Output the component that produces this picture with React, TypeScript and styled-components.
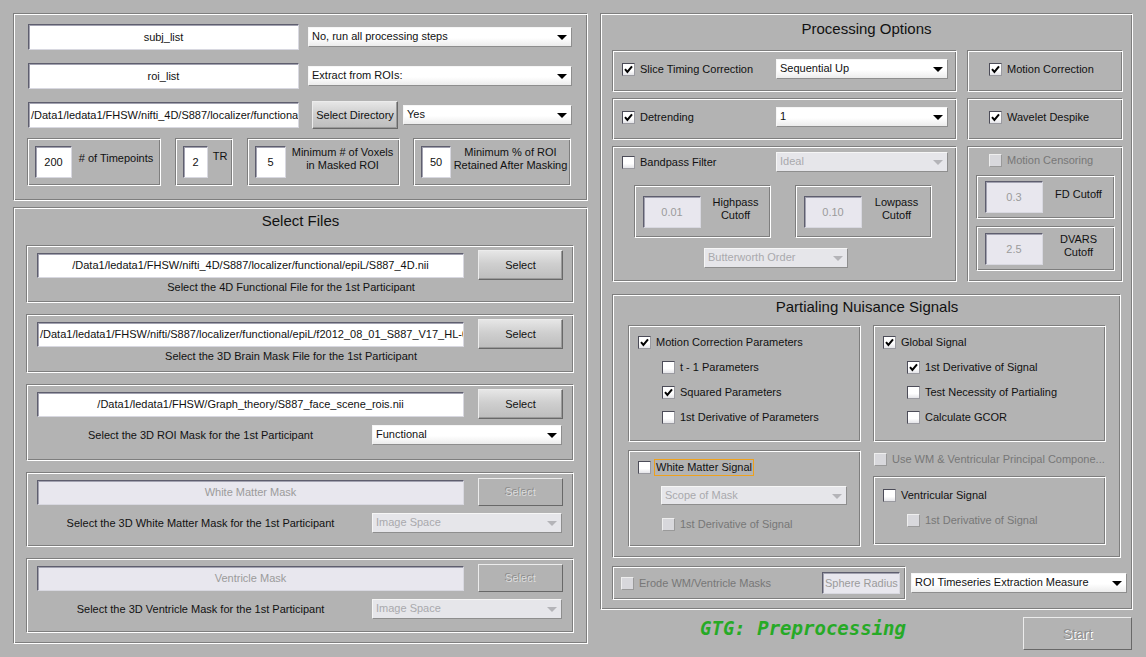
import React from "react";
import styled, { createGlobalStyle, css } from "styled-components";

const GlobalStyle = createGlobalStyle`
  html, body {
    margin: 0;
    padding: 0;
    background: #b3b3b3;
  }
  body {
    font-family: "Liberation Sans", Arial, sans-serif;
    font-size: 11px;
    color: #111;
  }
  * {
    box-sizing: border-box;
  }
`;

// etched-in frame border used by every uipanel
const etched = css`
  border: 1px solid;
  border-color: #7e7e7e #ffffff #ffffff #7e7e7e;
  box-shadow: inset 1px 1px 0 #ffffff, inset -1px -1px 0 #7e7e7e;
`;

const Screen = styled.div`
  width: 1146px;
  height: 657px;
  display: flex;
  align-items: flex-start;
  gap: 12px;
  padding: 13px 0 0 13px;
  overflow: hidden;
`;

const Column = styled.div<{ $w: number }>`
  width: ${(p) => p.$w}px;
  display: flex;
  flex-direction: column;
  flex: none;
`;

const Frame = styled.div<{ $w: number; $h: number; $ml?: number }>`
  ${etched};
  width: ${(p) => p.$w}px;
  height: ${(p) => p.$h}px;
  margin-left: ${(p) => p.$ml ?? 0}px;
  flex: none;
`;

const PanelTitle = styled.div<{ $h: number; $lh: number }>`
  height: ${(p) => p.$h}px;
  line-height: ${(p) => p.$lh}px;
  text-align: center;
  font-size: 15px;
  color: #111;
`;

/* ---------- basic controls ---------- */

const TextField = styled.div<{ $w: number; $h: number; $disabled?: boolean }>`
  width: ${(p) => p.$w}px;
  height: ${(p) => p.$h}px;
  flex: none;
  padding: 0 2px;
  background: ${(p) => (p.$disabled ? "#e8e7ee" : "#ffffff")};
  color: ${(p) => (p.$disabled ? "#9b9b9b" : "#111")};
  border: 1px solid;
  border-color: #5e5e6e #d8d8e0 #d8d8e0 #5e5e6e;
  box-shadow: inset 1px 1px 0 #a2a2b0;
  line-height: ${(p) => p.$h - 2}px;
  text-align: center;
  white-space: nowrap;
  overflow: hidden;
`;

const Dropdown = styled.div<{ $w: number; $h?: number; $ml?: number; $disabled?: boolean }>`
  position: relative;
  width: ${(p) => p.$w}px;
  height: ${(p) => p.$h ?? 20}px;
  margin-left: ${(p) => p.$ml ?? 0}px;
  flex: none;
  padding: 0 18px 0 3px;
  line-height: ${(p) => (p.$h ?? 20) - 3}px;
  white-space: nowrap;
  overflow: hidden;
  color: ${(p) => (p.$disabled ? "#a9a9ad" : "#111")};
  background: ${(p) =>
    p.$disabled ? "#e6e6ea" : "linear-gradient(#ffffff, #ffffff 55%, #ececec)"};
  border: 1px solid;
  border-color: #f6f6f6 #8e8e8e #8e8e8e #f6f6f6;

  &::after {
    content: "";
    position: absolute;
    right: 4px;
    top: 50%;
    margin-top: -2px;
    border-left: 5px solid transparent;
    border-right: 5px solid transparent;
    border-top: 5px solid ${(p) => (p.$disabled ? "#b4b4b8" : "#000")};
  }
`;

const PushButton = styled.div<{ $w: number; $h: number; $ml?: number; $disabled?: boolean }>`
  width: ${(p) => p.$w}px;
  height: ${(p) => p.$h}px;
  margin-left: ${(p) => p.$ml ?? 0}px;
  flex: none;
  display: flex;
  align-items: center;
  justify-content: center;
  white-space: nowrap;
  border: 1px solid;
  border-color: #ececec #686868 #686868 #ececec;
  ${(p) =>
    p.$disabled
      ? css`
          background: #b3b3b3;
          color: #dcdcdc;
          text-shadow: -1px -1px 0 #8a8a8a;
        `
      : css`
          background: linear-gradient(#e6e6e6, #cfcfcf 45%, #bdbdbd);
          box-shadow: inset -1px -1px 0 #9a9a9a;
          color: #111;
        `}
`;

const Box = styled.span<{ $disabled?: boolean }>`
  width: 13px;
  height: 13px;
  flex: none;
  display: inline-flex;
  align-items: center;
  justify-content: center;
  border: 1px solid;
  ${(p) =>
    p.$disabled
      ? css`
          background: #d8d8dc;
          border-color: #eeeeee #9a9a9a #9a9a9a #eeeeee;
        `
      : css`
          background: linear-gradient(#ffffff, #ffffff 60%, #e4e4e8);
          border-color: #4c4c58 #9a9aa0 #9a9aa0 #4c4c58;
        `}
`;

const Caption = styled.span<{ $disabled?: boolean; $focus?: boolean }>`
  white-space: nowrap;
  color: ${(p) => (p.$disabled ? "#777" : "#111")};
  padding: 0 1px;
  border: 1px solid ${(p) => (p.$focus ? "#eea11c" : "transparent")};
  line-height: 15px;
`;

const CheckRow = styled.div<{ $h?: number; $indent?: number }>`
  display: flex;
  align-items: center;
  gap: 3px;
  height: ${(p) => p.$h ?? 25}px;
  padding-left: ${(p) => p.$indent ?? 0}px;
  flex: none;
`;

function Check({
  label,
  checked,
  disabled,
  focus,
  h,
  indent,
}: {
  label: string;
  checked?: boolean;
  disabled?: boolean;
  focus?: boolean;
  h?: number;
  indent?: number;
}) {
  return (
    <CheckRow $h={h} $indent={indent}>
      <Box $disabled={disabled}>
        {checked && (
          <svg width="11" height="11" viewBox="0 0 11 11">
            <path d="M2 5.2 L4.4 8 L9 2.4" fill="none" stroke="#000" strokeWidth="2" />
          </svg>
        )}
      </Box>
      <Caption $disabled={disabled} $focus={focus}>
        {label}
      </Caption>
    </CheckRow>
  );
}

/* ---------- setup panel (top left) ---------- */

const SetupPanel = styled(Frame)`
  display: flex;
  flex-direction: column;
  gap: 13px;
  padding: 10px 0 0 14px;
`;

const FieldRow = styled.div`
  display: flex;
  align-items: center;
  height: 26px;
`;

const NumberRow = styled.div`
  display: flex;
  margin: -3px 0 0 -1px;
`;

const NumberFrame = styled(Frame)`
  display: flex;
  align-items: center;
  padding-left: 7px;
`;

const NumberLabel = styled.div<{ $mb: number }>`
  flex: 1;
  text-align: center;
  line-height: 13px;
  margin-bottom: ${(p) => p.$mb}px;
  white-space: nowrap;
`;

/* ---------- select files panel ---------- */

const FilesPanel = styled(Frame)`
  display: flex;
  flex-direction: column;
  gap: 11px;
  padding: 0 12px;
  margin-top: 6px;
`;

const FileFrame = styled(Frame)`
  display: flex;
  flex-direction: column;
  padding: 4px 0 0 10px;
`;

const FileTop = styled.div`
  display: flex;
  align-items: center;
  height: 30px;
  gap: 14px;
`;

const FileNote = styled.div<{ $w: number }>`
  width: ${(p) => p.$w}px;
  text-align: center;
  line-height: 14px;
  white-space: nowrap;
`;

const FileBottom = styled.div`
  display: flex;
  align-items: center;
  height: 20px;
  margin-top: 6px;
`;

/* ---------- processing options ---------- */

const OptionsPanel = styled(Frame)`
  display: flex;
  flex-direction: column;
  padding: 0 11px;
`;

const OptionGrid = styled.div`
  display: grid;
  grid-template-columns: 345px 156px;
  grid-template-rows: 42px 42px 136px;
  column-gap: 10px;
  row-gap: 6px;
`;

const StepFrame = styled.div`
  ${etched};
  display: flex;
  align-items: center;
  padding: 0 8px 4px 9px;
`;

const ToggleFrame = styled.div`
  ${etched};
  display: flex;
  align-items: center;
  padding: 0 0 4px 21px;
`;

const FilterFrame = styled.div`
  ${etched};
  display: flex;
  flex-direction: column;
  padding: 5px 8px 0 9px;
`;

const FilterHead = styled.div`
  display: flex;
  align-items: center;
  height: 20px;
`;

const CutoffRow = styled.div`
  display: flex;
  margin-top: 13px;
`;

const CutoffFrame = styled(Frame)`
  display: flex;
  align-items: center;
  padding-left: 8px;
`;

const CutoffLabel = styled.div`
  flex: 1;
  text-align: center;
  line-height: 13px;
  margin-bottom: 6px;
  white-space: nowrap;
`;

const OrderRow = styled.div`
  display: flex;
  margin: 10px 0 0 82px;
`;

const CensorFrame = styled.div`
  ${etched};
  display: flex;
  flex-direction: column;
  padding-top: 6px;
`;

const CensorStack = styled.div`
  display: flex;
  flex-direction: column;
  gap: 7px;
  margin: 8px 0 0 8px;
`;

/* ---------- nuisance signals ---------- */

const NuisanceFrame = styled(Frame)`
  margin-top: 12px;
  padding: 0 14px 0 15px;
  display: flex;
  flex-direction: column;
`;

const NuisanceGrid = styled.div`
  display: grid;
  grid-template-columns: 233px 233px;
  grid-template-rows: 117px 97px;
  column-gap: 12px;
  row-gap: 8px;
`;

const SignalFrame = styled.div<{ $pt?: number }>`
  ${etched};
  display: flex;
  flex-direction: column;
  padding: ${(p) => p.$pt ?? 4}px 0 0 9px;
`;

const SignalStack = styled.div`
  display: flex;
  flex-direction: column;
`;

const VentricleFrame = styled(SignalFrame)`
  margin-top: 8px;
  height: 69px;
`;

const ScopeRow = styled.div`
  display: flex;
  margin: 6px 0 7px 23px;
`;

const ExtractRow = styled.div`
  display: flex;
  align-items: center;
  margin-top: 8px;
`;

const ErodeFrame = styled(Frame)`
  display: flex;
  align-items: center;
  justify-content: space-between;
  padding: 0 5px 0 8px;
`;

const Footer = styled.div`
  display: flex;
  align-items: flex-start;
  margin-top: 7px;
  height: 33px;
`;

const Brand = styled.div`
  width: 406px;
  text-align: center;
  line-height: 22px;
  font-family: "DejaVu Sans Mono", "Liberation Mono", monospace;
  font-weight: bold;
  font-style: italic;
  font-size: 19px;
  color: #26aa26;
`;

const StartButton = styled(PushButton)`
  font-size: 14px;
  color: #909090;
  text-shadow: 1px 1px 0 #ffffff;
`;

const files = [
  {
    path: "/Data1/ledata1/FHSW/nifti_4D/S887/localizer/functional/epiL/S887_4D.nii",
    note: "Select the 4D Functional File for the 1st Participant",
    h: 58,
  },
  {
    path: "/Data1/ledata1/FHSW/nifti/S887/localizer/functional/epiL/f2012_08_01_S887_V17_HL-004_brain_mask.nii",
    note: "Select the 3D Brain Mask File for the 1st Participant",
    h: 59,
  },
];

const masks = [
  {
    path: "/Data1/ledata1/FHSW/Graph_theory/S887_face_scene_rois.nii",
    note: "Select the 3D ROI Mask for the 1st Participant",
    space: "Functional",
    disabled: false,
    h: 77,
  },
  {
    path: "White Matter Mask",
    note: "Select the 3D White Matter Mask for the 1st Participant",
    space: "Image Space",
    disabled: true,
    h: 75,
  },
  {
    path: "Ventricle Mask",
    note: "Select the 3D Ventricle Mask for the 1st Participant",
    space: "Image Space",
    disabled: true,
    h: 75,
  },
];

export default function App() {
  return (
    <>
      <GlobalStyle />
      <Screen>
        <Column $w={575}>
          <SetupPanel $w={575} $h={188}>
            <FieldRow>
              <TextField $w={271} $h={26}>subj_list</TextField>
              <Dropdown $w={264} $ml={9}>No, run all processing steps</Dropdown>
            </FieldRow>
            <FieldRow>
              <TextField $w={271} $h={26}>roi_list</TextField>
              <Dropdown $w={264} $ml={9}>Extract from ROIs:</Dropdown>
            </FieldRow>
            <FieldRow>
              <TextField $w={271} $h={26}>
                /Data1/ledata1/FHSW/nifti_4D/S887/localizer/functional/epiL/
              </TextField>
              <PushButton $w={86} $h={28} $ml={13}>
                Select Directory
              </PushButton>
              <Dropdown $w={169} $ml={5}>Yes</Dropdown>
            </FieldRow>
            <NumberRow>
              <NumberFrame $w={134} $h={48}>
                <TextField $w={37} $h={32}>200</TextField>
                <NumberLabel $mb={8}># of Timepoints</NumberLabel>
              </NumberFrame>
              <NumberFrame $w={58} $h={48} $ml={14}>
                <TextField $w={25} $h={32}>2</TextField>
                <NumberLabel $mb={12}>TR</NumberLabel>
              </NumberFrame>
              <NumberFrame $w={153} $h={48} $ml={14}>
                <TextField $w={31} $h={32}>5</TextField>
                <NumberLabel $mb={6}>
                  Minimum # of Voxels
                  <br />
                  in Masked ROI
                </NumberLabel>
              </NumberFrame>
              <NumberFrame $w={158} $h={48} $ml={13}>
                <TextField $w={30} $h={32}>50</TextField>
                <NumberLabel $mb={6}>
                  Minimum % of ROI
                  <br />
                  Retained After Masking
                </NumberLabel>
              </NumberFrame>
            </NumberRow>
          </SetupPanel>

          <FilesPanel $w={575} $h={437}>
            <PanelTitle $h={26} $lh={26}>
              Select Files
            </PanelTitle>
            {files.map((f) => (
              <FileFrame key={f.note} $w={548} $h={f.h}>
                <FileTop>
                  <TextField $w={427} $h={25}>{f.path}</TextField>
                  <PushButton $w={85} $h={30}>Select</PushButton>
                </FileTop>
                <FileNote $w={508}>{f.note}</FileNote>
              </FileFrame>
            ))}
            {masks.map((m) => (
              <FileFrame key={m.note} $w={548} $h={m.h}>
                <FileTop>
                  <TextField $w={427} $h={25} $disabled={m.disabled}>
                    {m.path}
                  </TextField>
                  <PushButton $w={85} $h={m.disabled ? 28 : 30} $disabled={m.disabled}>
                    Select
                  </PushButton>
                </FileTop>
                <FileBottom>
                  <FileNote $w={327}>{m.note}</FileNote>
                  <Dropdown $w={190} $ml={8} $disabled={m.disabled}>
                    {m.space}
                  </Dropdown>
                </FileBottom>
              </FileFrame>
            ))}
          </FilesPanel>
        </Column>

        <Column $w={533}>
          <OptionsPanel $w={533} $h={597}>
            <PanelTitle $h={36} $lh={30}>
              Processing Options
            </PanelTitle>
            <OptionGrid>
              <StepFrame>
                <Check label="Slice Timing Correction" checked />
                <Dropdown $w={172} style={{ marginLeft: "auto" }}>
                  Sequential Up
                </Dropdown>
              </StepFrame>
              <ToggleFrame>
                <Check label="Motion Correction" checked />
              </ToggleFrame>
              <StepFrame>
                <Check label="Detrending" checked />
                <Dropdown $w={172} style={{ marginLeft: "auto" }}>
                  1
                </Dropdown>
              </StepFrame>
              <ToggleFrame>
                <Check label="Wavelet Despike" checked />
              </ToggleFrame>
              <FilterFrame>
                <FilterHead>
                  <Check label="Bandpass Filter" h={20} />
                  <Dropdown $w={172} $disabled style={{ marginLeft: "auto" }}>
                    Ideal
                  </Dropdown>
                </FilterHead>
                <CutoffRow>
                  <CutoffFrame $w={137} $h={53} $ml={12}>
                    <TextField $w={58} $h={32} $disabled>
                      0.01
                    </TextField>
                    <CutoffLabel>
                      Highpass
                      <br />
                      Cutoff
                    </CutoffLabel>
                  </CutoffFrame>
                  <CutoffFrame $w={137} $h={53} $ml={24}>
                    <TextField $w={58} $h={32} $disabled>
                      0.10
                    </TextField>
                    <CutoffLabel>
                      Lowpass
                      <br />
                      Cutoff
                    </CutoffLabel>
                  </CutoffFrame>
                </CutoffRow>
                <OrderRow>
                  <Dropdown $w={144} $disabled>
                    Butterworth Order
                  </Dropdown>
                </OrderRow>
              </FilterFrame>
              <CensorFrame>
                <Check label="Motion Censoring" disabled h={14} indent={21} />
                <CensorStack>
                  <CutoffFrame $w={139} $h={44}>
                    <TextField $w={58} $h={32} $disabled>
                      0.3
                    </TextField>
                    <CutoffLabel>FD Cutoff</CutoffLabel>
                  </CutoffFrame>
                  <CutoffFrame $w={139} $h={45}>
                    <TextField $w={58} $h={32} $disabled>
                      2.5
                    </TextField>
                    <CutoffLabel>
                      DVARS
                      <br />
                      Cutoff
                    </CutoffLabel>
                  </CutoffFrame>
                </CensorStack>
              </CensorFrame>
            </OptionGrid>

            <NuisanceFrame $w={509} $h={264}>
              <PanelTitle $h={30} $lh={24}>
                Partialing Nuisance Signals
              </PanelTitle>
              <NuisanceGrid>
                <SignalFrame>
                  <Check label="Motion Correction Parameters" checked />
                  <Check label="t - 1 Parameters" indent={24} />
                  <Check label="Squared Parameters" checked indent={24} />
                  <Check label="1st Derivative of Parameters" indent={24} />
                </SignalFrame>
                <SignalFrame>
                  <Check label="Global Signal" checked />
                  <Check label="1st Derivative of Signal" checked indent={24} />
                  <Check label="Test Necessity of Partialing" indent={24} />
                  <Check label="Calculate GCOR" indent={24} />
                </SignalFrame>
                <SignalFrame>
                  <Check label="White Matter Signal" focus />
                  <ScopeRow>
                    <Dropdown $w={186} $h={19} $disabled>
                      Scope of Mask
                    </Dropdown>
                  </ScopeRow>
                  <Check label="1st Derivative of Signal" disabled indent={24} />
                </SignalFrame>
                <SignalStack>
                  <Check
                    label="Use WM & Ventricular Principal Compone..."
                    disabled
                    h={18}
                    indent={1}
                  />
                  <VentricleFrame $pt={6}>
                    <Check label="Ventricular Signal" />
                    <Check label="1st Derivative of Signal" disabled indent={24} />
                  </VentricleFrame>
                </SignalStack>
              </NuisanceGrid>
            </NuisanceFrame>

            <ExtractRow>
              <ErodeFrame $w={294} $h={34}>
                <Check label="Erode WM/Ventricle Masks" disabled h={20} />
                <TextField $w={78} $h={22} $disabled>
                  Sphere Radius
                </TextField>
              </ErodeFrame>
              <Dropdown $w={216} $ml={5}>
                ROI Timeseries Extraction Measure
              </Dropdown>
            </ExtractRow>
          </OptionsPanel>
          <Footer>
            <Brand>GTG: Preprocessing</Brand>
            <StartButton $w={109} $h={33} $ml={17} $disabled>
              Start
            </StartButton>
          </Footer>
        </Column>
      </Screen>
    </>
  );
}
